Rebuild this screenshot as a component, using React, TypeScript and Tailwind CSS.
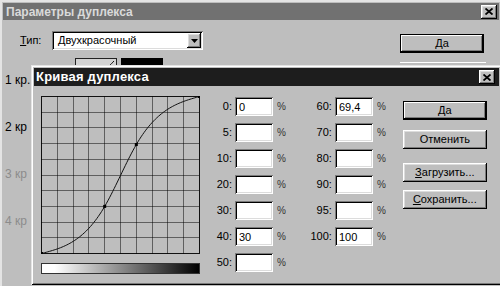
import type { ReactNode } from "react";

const FONT = "font-['Liberation_Sans',Arial,sans-serif]";

const RAISED =
  "shadow-[inset_-1px_-1px_0_#000,inset_1px_1px_0_#fff,inset_-2px_-2px_0_#7b7b7b,inset_2px_2px_0_#dcdcdc]";
const SUNKEN =
  "shadow-[inset_1px_1px_0_#7b7b7b,inset_-1px_-1px_0_#fff,inset_2px_2px_0_#000,inset_-2px_-2px_0_#dcdcdc]";

const LEFT_ROWS: [string, string][] = [
  ["0:", "0"],
  ["5:", ""],
  ["10:", ""],
  ["20:", ""],
  ["30:", ""],
  ["40:", "30"],
  ["50:", ""],
];

const RIGHT_ROWS: [string, string][] = [
  ["60:", "69,4"],
  ["70:", ""],
  ["80:", ""],
  ["90:", ""],
  ["95:", ""],
  ["100:", "100"],
];

// curve points in percent (input, output)
const CURVE: [number, number][] = [
  [0, 0],
  [40, 30],
  [60, 69.4],
  [100, 100],
];

const GW = 158;
const GH = 157;

function toXY([x, y]: [number, number]): [number, number] {
  return [(x / 100) * GW, GH - (y / 100) * GH];
}

// natural cubic spline through the points, sampled as a polyline
function curvePath(): string {
  const xs = CURVE.map((p) => p[0]);
  const ys = CURVE.map((p) => p[1]);
  const n = xs.length;
  const h = xs.slice(1).map((x, i) => x - xs[i]);
  const m = new Array(n).fill(0);
  const a: number[] = [];
  const b: number[] = [];
  const c: number[] = [];
  const r: number[] = [];
  for (let i = 1; i < n - 1; i++) {
    a.push(h[i - 1]);
    b.push(2 * (h[i - 1] + h[i]));
    c.push(h[i]);
    r.push(6 * ((ys[i + 1] - ys[i]) / h[i] - (ys[i] - ys[i - 1]) / h[i - 1]));
  }
  const k = b.length;
  for (let i = 1; i < k; i++) {
    const w = a[i] / b[i - 1];
    b[i] -= w * c[i - 1];
    r[i] -= w * r[i - 1];
  }
  const sol = new Array(k).fill(0);
  for (let i = k - 1; i >= 0; i--) {
    sol[i] = (r[i] - (i < k - 1 ? c[i] * sol[i + 1] : 0)) / b[i];
  }
  sol.forEach((v, i) => (m[i + 1] = v));

  const pts: string[] = [];
  for (let x = 0; x <= 100; x += 1) {
    let i = 0;
    while (i < n - 2 && x > xs[i + 1]) i++;
    const t1 = xs[i + 1] - x;
    const t0 = x - xs[i];
    const hi = h[i];
    let y =
      (m[i] * t1 ** 3) / (6 * hi) +
      (m[i + 1] * t0 ** 3) / (6 * hi) +
      (ys[i] / hi - (m[i] * hi) / 6) * t1 +
      (ys[i + 1] / hi - (m[i + 1] * hi) / 6) * t0;
    y = Math.max(0, Math.min(100, y));
    const [px, py] = toXY([x, y]);
    pts.push(`${px.toFixed(2)},${py.toFixed(2)}`);
  }
  return "M" + pts.join(" L");
}

function CloseBox() {
  return (
    <div className={`flex h-[14px] w-[16px] items-center justify-center bg-[#bebebe] ${RAISED}`}>
      <svg width="8" height="7" viewBox="0 0 8 7">
        <path d="M0.5,0.5 L7.5,6.5 M7.5,0.5 L0.5,6.5" stroke="#000" strokeWidth="1.8" />
      </svg>
    </div>
  );
}

function Button({ children, isDefault }: { children: ReactNode; isDefault?: boolean }) {
  return (
    <div
      className={`flex h-[19px] w-[84px] items-center justify-center bg-[#bebebe] text-[11px] text-black ${
        isDefault
          ? "shadow-[inset_0_0_0_1px_#000,inset_-2px_-2px_0_#000,inset_2px_2px_0_#fff,inset_-3px_-3px_0_#7b7b7b]"
          : RAISED
      }`}
    >
      {children}
    </div>
  );
}

function Field({ label, value, labelW }: { label: string; value: string; labelW: string }) {
  return (
    <div className="flex h-[19px] items-center">
      <span className={`${labelW} pr-[3px] text-right text-[11px] text-black`}>{label}</span>
      <div className={`flex h-[19px] w-[38px] items-center bg-white pl-[4px] pt-[1px] text-[11px] text-black ${SUNKEN}`}>
        {value}
      </div>
      <span className="ml-[4px] text-[10px] text-[#333]">%</span>
    </div>
  );
}

function Graph() {
  const lines = Array.from({ length: 9 }, (_, i) => (i + 1) / 10);
  return (
    <svg width={GW + 1} height={GH + 1} viewBox={`-0.5 -0.5 ${GW + 1} ${GH + 1}`} className="block">
      <rect x="0" y="0" width={GW} height={GH} fill="#bebebe" stroke="#111" strokeWidth="1" />
      {lines.map((f) => (
        <g key={f}>
          <line x1={Math.round(f * GW)} y1="0" x2={Math.round(f * GW)} y2={GH} stroke="#000" strokeDasharray="1 1" />
          <line x1="0" y1={Math.round(f * GH)} x2={GW} y2={Math.round(f * GH)} stroke="#000" strokeDasharray="1 1" />
        </g>
      ))}
      <path d={curvePath()} fill="none" stroke="#111" strokeWidth="1" />
      {CURVE.map((pt) => {
        const [x, y] = toXY(pt);
        return <rect key={pt[0]} x={x - 1.5} y={y - 1.5} width="3" height="3" fill="#000" />;
      })}
    </svg>
  );
}

export default function App() {
  return (
    <div className={`relative h-[286px] w-[500px] overflow-hidden bg-[#bebebe] ${FONT}`}>
      {/* back window */}
      <div className="absolute inset-0 border-l-2 border-t-2 border-[#e4e4e4] bg-[#bebebe]">
        <div className="mx-[1px] mt-[1px] flex h-[17px] items-center justify-between bg-[#717171] pl-[3px] pr-[2px]">
          <span className="text-[12px] font-bold text-[#dadada]">Параметры дуплекса</span>
          <CloseBox />
        </div>
        <div className="flex">
          <div className="flex w-[380px] flex-col">
            <div className="mt-[11px] flex items-center">
              <span className="ml-[18px] w-[32px] text-[11px] text-black">
                <span className="underline">Т</span>ип:
              </span>
              <div className={`flex h-[19px] w-[151px] items-center justify-between bg-white pl-[6px] pr-[2px] ${SUNKEN}`}>
                <span className="text-[11px] text-black">Двухкрасочный</span>
                <div className={`flex h-[15px] w-[14px] items-center justify-center bg-[#bebebe] ${RAISED}`}>
                  <svg width="7" height="4" viewBox="0 0 7 4">
                    <path d="M0,0 H7 L3.5,4 Z" fill="#000" />
                  </svg>
                </div>
              </div>
            </div>
            <div className="ml-[73px] mt-[8px] flex gap-[4px]">
              <div className="relative h-[20px] w-[42px] border border-[#222] bg-[#d2d2d2]">
                <svg width="10" height="8" viewBox="0 0 10 8" className="absolute right-[1px] top-[1px]">
                  <path d="M1,7 C4,7 6,4 9,1" stroke="#111" fill="none" />
                </svg>
              </div>
              <div className="h-[20px] w-[42px] bg-black" />
            </div>
            <div className="-mt-[7px] ml-[3px] flex flex-col gap-[29px] text-[12px]">
              <span className="text-black">1 кр.</span>
              <span className="text-black">2 кр</span>
              <span className="text-[#8c8c8c]">3 кр</span>
              <span className="text-[#8c8c8c]">4 кр</span>
            </div>
          </div>
          <div className="ml-[18px] mt-[14px] flex flex-col gap-[9px]">
            <div className="w-[87px]">
              <Button isDefault>Да</Button>
            </div>
            <div className="h-[1px] w-[86px] bg-white" />
          </div>
        </div>
      </div>

      {/* front window */}
      <div className="absolute left-[31px] top-[65px] h-[220px] w-[471px] bg-[#bebebe] p-[3px] shadow-[inset_1px_1px_0_#e4e4e4,inset_-1px_-1px_0_#000,inset_2px_2px_0_#fff,inset_-2px_-2px_0_#7b7b7b]">
        <div className="flex h-[18px] items-center justify-between bg-[#1d1d1d] pl-[2px] pr-[4px]">
          <span className="text-[13px] font-bold tracking-[0.2px] text-white">Кривая дуплекса</span>
          <CloseBox />
        </div>
        <div className="flex">
          <div className="ml-[7px] mt-[10px] flex flex-col gap-[9px]">
            <Graph />
            <div className="h-[11px] w-[159px] border border-[#333] bg-[linear-gradient(to_right,#fff_8%,#999_45%,#000_100%)]" />
          </div>
          <div className="ml-[5px] mt-[11px] flex flex-col gap-[7px]">
            {LEFT_ROWS.map(([l, v]) => (
              <Field key={l} label={l} value={v} labelW="w-[30px]" />
            ))}
          </div>
          <div className="ml-[14px] mt-[11px] flex flex-col gap-[7px]">
            {RIGHT_ROWS.map(([l, v]) => (
              <Field key={l} label={l} value={v} labelW="w-[35px]" />
            ))}
          </div>
          <div className="ml-[17px] mt-[15px] flex flex-col">
            <Button isDefault>Да</Button>
            <div className="mt-[10px]">
              <Button>Отменить</Button>
            </div>
            <div className="mt-[14px]">
              <Button>
                <span className="underline">З</span>агрузить...
              </Button>
            </div>
            <div className="mt-[8px]">
              <Button>
                <span className="underline">С</span>охранить...
              </Button>
            </div>
          </div>
        </div>
      </div>
    </div>
  );
}
